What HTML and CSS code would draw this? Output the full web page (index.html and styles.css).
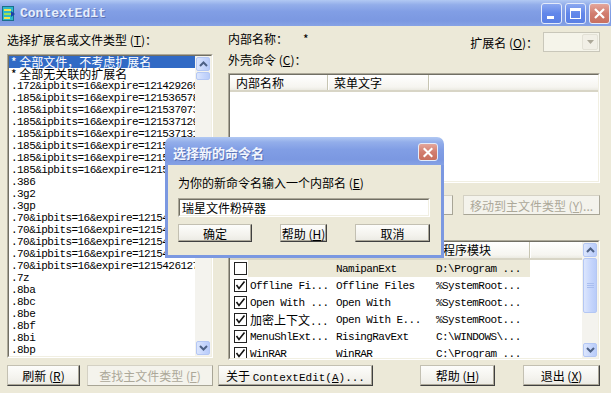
FILE: index.html
```html
<!DOCTYPE html>
<html lang="zh">
<head>
  <meta charset="UTF-8">
  <title>ContextEdit</title>
  <link rel="stylesheet" href="styles.css">
</head>
<body>
<div class="window">

  <!-- 标题栏 -->
  <div class="titlebar">
    <svg class="app-icon" width="13" height="15" viewBox="0 0 13 15">
      <rect x="0.5" y="0.5" width="11" height="14" fill="#2FB8C9" stroke="#1B6F8A"/>
      <rect x="2" y="3" width="7" height="2" fill="#F3E34B"/>
      <rect x="2" y="7" width="8" height="2" fill="#9BE05A"/>
      <rect x="2" y="11" width="6" height="2" fill="#F3E34B"/>
      <path d="M9 5 L13 8 L9 11 Z" fill="#1E3FA8"/>
    </svg>
    <span class="title">ContextEdit</span>
    <div class="caption-buttons">
      <span class="cap-btn"><svg width="19" height="19" viewBox="0 0 19 19"><rect x="5" y="12" width="7" height="3" fill="#fff"/></svg></span>
      <span class="cap-btn"><svg width="19" height="19" viewBox="0 0 19 19"><rect x="4.5" y="4.5" width="10" height="10" fill="none" stroke="#fff"/><rect x="4" y="4" width="11" height="3" fill="#fff"/></svg></span>
      <span class="cap-btn close"><svg width="19" height="19" viewBox="0 0 19 19"><path d="M5 5 L14 14 M14 5 L5 14" stroke="#fff" stroke-width="2.2"/></svg></span>
    </div>
  </div>

  <div class="client">
    <div class="main">

      <!-- 左边：扩展名列表 -->
      <div class="left-col">
        <div class="label row16">选择扩展名或文件类型 (<u>T</u>)：</div>
        <div class="sunken listbox">
          <div class="sunken-in">
            <div class="items">
              <div class="item cjk selected">* 全部文件，不考虑扩展名</div>
              <div class="item cjk">* 全部无关联的扩展名</div>
              <div class="item mono">.172&amp;ipbits=16&amp;expire=1214292695</div>
              <div class="item mono">.185&amp;ipbits=16&amp;expire=1215365788</div>
              <div class="item mono">.185&amp;ipbits=16&amp;expire=1215370735</div>
              <div class="item mono">.185&amp;ipbits=16&amp;expire=1215371295</div>
              <div class="item mono">.185&amp;ipbits=16&amp;expire=1215371315</div>
              <div class="item mono">.185&amp;ipbits=16&amp;expire=1215372208</div>
              <div class="item mono">.185&amp;ipbits=16&amp;expire=1215373410</div>
              <div class="item mono">.185&amp;ipbits=16&amp;expire=1215375542</div>
              <div class="item mono">.386</div>
              <div class="item mono">.3g2</div>
              <div class="item mono">.3gp</div>
              <div class="item mono">.70&amp;ipbits=16&amp;expire=1215420013</div>
              <div class="item mono">.70&amp;ipbits=16&amp;expire=1215421187</div>
              <div class="item mono">.70&amp;ipbits=16&amp;expire=1215423350</div>
              <div class="item mono">.70&amp;ipbits=16&amp;expire=1215424871</div>
              <div class="item mono">.70&amp;ipbits=16&amp;expire=1215426127</div>
              <div class="item mono">.7z</div>
              <div class="item mono">.8ba</div>
              <div class="item mono">.8bc</div>
              <div class="item mono">.8be</div>
              <div class="item mono">.8bf</div>
              <div class="item mono">.8bi</div>
              <div class="item mono">.8bp</div>
            </div>
            <div class="vscroll">
              <span class="sb-btn"><svg width="9" height="6" viewBox="0 0 9 6"><path d="M1 5 L4.5 1.5 L8 5" fill="none" stroke="#4D6185" stroke-width="2"/></svg></span>
              <span class="sb-thumb small"></span>
              <span class="sb-track"></span>
              <span class="sb-btn"><svg width="9" height="6" viewBox="0 0 9 6"><path d="M1 1 L4.5 4.5 L8 1" fill="none" stroke="#4D6185" stroke-width="2"/></svg></span>
            </div>
          </div>
        </div>
      </div>

      <!-- 右边：命令和处理程序 -->
      <div class="right-col">
        <div class="top-row">
          <div class="label row14">内部名称：<span class="star">*</span></div>
          <div class="ext">
            <span class="label">扩展名 (<u>O</u>)：</span>
            <div class="combo disabled">
              <span class="combo-btn"><svg width="7" height="4" viewBox="0 0 7 4"><path d="M0 0 L7 0 L3.5 4 Z" fill="#ACA899"/></svg></span>
            </div>
          </div>
        </div>
        <div class="label row14 shell-label">外壳命令 (<u>C</u>)：</div>

        <div class="sunken listview lv1">
          <div class="sunken-in col">
            <div class="header">
              <span class="hcol" style="width:98px">内部名称</span>
              <span class="hcol" style="width:101px">菜单文字</span>
              <span class="hfill"></span>
            </div>
          </div>
        </div>

        <div class="cmd-buttons">
          <button class="btn" style="width:70px">新建 (<u>N</u>)...</button>
          <button class="btn" style="width:70px">编辑 (<u>E</u>)...</button>
          <button class="btn disabled" style="width:75px">删除 (<u>D</u>)</button>
          <button class="btn disabled move">移动到主文件类型 (<u>Y</u>)...</button>
        </div>

        <div class="label row14 handler-label">上下文菜单处理程序 (<u>M</u>)：</div>

        <div class="sunken listview lv2">
          <div class="sunken-in">
            <div class="lv-body">
              <div class="header">
                <span class="hcol" style="width:102px">名称</span>
                <span class="hcol" style="width:100px">说明</span>
                <span class="hcol" style="width:98px">程序模块</span>
                <span class="hfill"></span>
              </div>
              <div class="row selected">
                <span class="chk"><svg width="13" height="13" viewBox="0 0 13 13"><rect x="0.5" y="0.5" width="12" height="12" fill="#fff" stroke="#222"/></svg></span>
                <span class="cells"><span class="c1 mono"></span><span class="c2 mono">NamipanExt</span><span class="c3 mono">D:\Program ...</span></span>
              </div>
              <div class="row">
                <span class="chk"><svg width="13" height="13" viewBox="0 0 13 13"><rect x="0.5" y="0.5" width="12" height="12" fill="#fff" stroke="#222"/><path d="M2.5 6 L5 9.5 L10.5 2.5" fill="none" stroke="#111" stroke-width="1.6"/></svg></span>
                <span class="cells"><span class="c1 mono">Offline Fi...</span><span class="c2 mono">Offline Files</span><span class="c3 mono">%SystemRoot...</span></span>
              </div>
              <div class="row">
                <span class="chk"><svg width="13" height="13" viewBox="0 0 13 13"><rect x="0.5" y="0.5" width="12" height="12" fill="#fff" stroke="#222"/><path d="M2.5 6 L5 9.5 L10.5 2.5" fill="none" stroke="#111" stroke-width="1.6"/></svg></span>
                <span class="cells"><span class="c1 mono">Open With ...</span><span class="c2 mono">Open With</span><span class="c3 mono">%SystemRoot...</span></span>
              </div>
              <div class="row">
                <span class="chk"><svg width="13" height="13" viewBox="0 0 13 13"><rect x="0.5" y="0.5" width="12" height="12" fill="#fff" stroke="#222"/><path d="M2.5 6 L5 9.5 L10.5 2.5" fill="none" stroke="#111" stroke-width="1.6"/></svg></span>
                <span class="cells"><span class="c1"><span class="cjk">加密上下文</span><span class="mono">...</span></span><span class="c2 mono">Open With E...</span><span class="c3 mono">%SystemRoot...</span></span>
              </div>
              <div class="row">
                <span class="chk"><svg width="13" height="13" viewBox="0 0 13 13"><rect x="0.5" y="0.5" width="12" height="12" fill="#fff" stroke="#222"/><path d="M2.5 6 L5 9.5 L10.5 2.5" fill="none" stroke="#111" stroke-width="1.6"/></svg></span>
                <span class="cells"><span class="c1 mono">MenuShlExt...</span><span class="c2 mono">RisingRavExt</span><span class="c3 mono">C:\WINDOWS\...</span></span>
              </div>
              <div class="row">
                <span class="chk"><svg width="13" height="13" viewBox="0 0 13 13"><rect x="0.5" y="0.5" width="12" height="12" fill="#fff" stroke="#222"/><path d="M2.5 6 L5 9.5 L10.5 2.5" fill="none" stroke="#111" stroke-width="1.6"/></svg></span>
                <span class="cells"><span class="c1 mono">WinRAR</span><span class="c2 mono">WinRAR</span><span class="c3 mono">C:\Program ...</span></span>
              </div>
            </div>
            <div class="vscroll">
              <span class="sb-btn"><svg width="9" height="6" viewBox="0 0 9 6"><path d="M1 5 L4.5 1.5 L8 5" fill="none" stroke="#4D6185" stroke-width="2"/></svg></span>
              <span class="sb-thumb big"><svg width="7" height="7" viewBox="0 0 7 7"><path d="M0 1.5 H7 M0 3.5 H7 M0 5.5 H7" stroke="#A9BEEF"/></svg></span>
              <span class="sb-track"></span>
              <span class="sb-btn"><svg width="9" height="6" viewBox="0 0 9 6"><path d="M1 1 L4.5 4.5 L8 1" fill="none" stroke="#4D6185" stroke-width="2"/></svg></span>
            </div>
          </div>
        </div>
      </div>
    </div>

    <!-- 底部按钮 -->
    <div class="bottom-buttons">
      <button class="btn b-refresh">刷新 (<u>R</u>)</button>
      <button class="btn disabled b-find">查找主文件类型 (<u>F</u>)</button>
      <button class="btn b-about">关于 <span class="mono big">ContextEdit(<u>A</u>)...</span></button>
      <button class="btn b-help">帮助 (<u>H</u>)</button>
      <button class="btn b-exit">退出 (<u>X</u>)</button>
    </div>
  </div>

  <!-- 对话框：选择新的命令名 -->
  <div class="dialog">
    <div class="dlg-titlebar">
      <span class="dlg-title">选择新的命令名</span>
      <span class="cap-btn close dlg-close"><svg width="19" height="17" viewBox="0 0 19 17"><path d="M5 4 L14 13 M14 4 L5 13" stroke="#fff" stroke-width="2.2"/></svg></span>
    </div>
    <div class="dlg-body">
      <div class="label row14">为你的新命令名输入一个内部名 (<u>E</u>)</div>
      <div class="sunken textbox"><div class="sunken-in">瑞星文件粉碎器</div></div>
      <div class="dlg-buttons">
        <button class="btn" style="width:74px">确定</button>
        <button class="btn" style="width:47px">帮助 (<u>H</u>)</button>
        <button class="btn" style="width:75px">取消</button>
      </div>
    </div>
  </div>

</div>
</body>
</html>
```

FILE: styles.css
```css
* {
  margin: 0;
  padding: 0;
  box-sizing: border-box;
}

body {
  width: 611px;
  height: 393px;
  overflow: hidden;
  font-family: "Noto Sans CJK SC", sans-serif;
  font-size: 12px;
  color: #000;
  background-color: #ECE9D8;
}

u {
  text-decoration: underline;
  text-underline-offset: 1px;
}

/* 宋体的 ASCII 字符较窄、较高 */
.mono {
  font-family: "Liberation Mono", monospace;
  font-size: 11px;
  letter-spacing: -0.55px;
}

.cjk {
  font-family: "Noto Sans CJK SC", sans-serif;
  font-size: 12px;
}

.window {
  position: relative;
  width: 611px;
  height: 393px;
  display: flex;
  flex-direction: column;
}

/* 标题栏 */
.titlebar {
  height: 26px;
  display: flex;
  align-items: center;
  padding: 0 1px 0 2px;
  background: linear-gradient(180deg, #B2C9F3 0%, #93AEEA 18%, #819EE5 45%, #7B98E1 80%, #86A2E5 100%);
}

.app-icon {
  margin-right: 5px;
}

.title {
  flex: 1;
  font-family: "Liberation Mono", monospace;
  font-weight: bold;
  font-size: 13px;
  color: #E6EEFC;
  text-shadow: 1px 1px #5B72B5;
}

.caption-buttons {
  display: flex;
  gap: 3px;
}

.cap-btn {
  width: 21px;
  height: 21px;
  display: flex;
  align-items: center;
  justify-content: center;
  border: 1px solid #E4EBFA;
  border-radius: 3px;
  background: linear-gradient(180deg, #8CA8F0 0%, #6187EA 50%, #5B80E4 100%);
}

.cap-btn.close {
  background: linear-gradient(180deg, #E4A79C 0%, #D27D6F 50%, #C8705F 100%);
}

/* 客户区 */
.client {
  flex: 1;
  padding: 6px 11px 0 7px;
}

.main {
  display: grid;
  grid-template-columns: 206px 372px;
  column-gap: 15px;
}

.label {
  white-space: nowrap;
}

.row16 {
  line-height: 16px;
}

.row14 {
  line-height: 14px;
}

/* 凹陷边框 */
.sunken {
  border: 1px solid;
  border-color: #ACA899 #FFFFFF #FFFFFF #ACA899;
  background: #fff;
}

.sunken-in {
  height: 100%;
  border: 1px solid;
  border-color: #716F64 #F1EFE2 #F1EFE2 #716F64;
  display: flex;
  overflow: hidden;
}

.sunken-in.col {
  flex-direction: column;
}

/* 左边列表 */
.listbox {
  margin-top: 6px;
  height: 304px;
}

.items {
  flex: 1;
  overflow: hidden;
}

.item {
  height: 12px;
  line-height: 12px;
  padding-left: 2px;
  white-space: nowrap;
}

.item.cjk {
  font-size: 12px;
}

.item.selected {
  background-color: #316AC5;
  color: #fff;
}

/* 滚动条 */
.vscroll {
  width: 16px;
  display: flex;
  flex-direction: column;
  background-color: #F4F3EE;
}

.sb-btn,
.sb-thumb {
  display: flex;
  align-items: center;
  justify-content: center;
  margin: 1px 1px 0 1px;
  border: 1px solid #B4C7F4;
  border-radius: 2px;
  background: linear-gradient(90deg, #DCE6FD 0%, #C5D5FC 60%, #B9CCF9 100%);
}

.sb-btn {
  height: 14px;
}

.sb-btn:last-child {
  margin-bottom: 1px;
}

.sb-thumb.small {
  height: 8px;
}

.sb-thumb.big {
  height: 55px;
}

.sb-track {
  flex: 1;
}

/* 右边 */
.top-row {
  height: 20px;
  display: flex;
  justify-content: space-between;
}

.star {
  margin-left: 15px;
}

.ext {
  display: flex;
  align-items: center;
  gap: 5px;
}

.combo {
  width: 57px;
  height: 20px;
  border: 1px solid #C9C7BA;
  background-color: #F5F4EA;
  display: flex;
  justify-content: flex-end;
  padding: 1px;
}

.combo-btn {
  width: 16px;
  display: flex;
  align-items: center;
  justify-content: center;
  border: 1px solid #E3E1D6;
  border-radius: 2px;
  background-color: #F1EFE6;
}

.shell-label {
  margin-top: 1px;
}

.listview {
  margin-top: 6px;
}

.lv1 {
  height: 110px;
}

.lv2 {
  height: 120px;
}

.header {
  height: 17px;
  display: flex;
  background: linear-gradient(180deg, #FFFFFF 0%, #F6F5F0 80%, #EBEAE2 100%);
  border-bottom: 2px solid #D8D5C6;
  flex-shrink: 0;
}

.hcol {
  padding-left: 6px;
  line-height: 15px;
  border-right: 1px solid #C7C5B2;
  box-shadow: 1px 0 #fff;
  white-space: nowrap;
  overflow: hidden;
}

.hfill {
  flex: 1;
}

.lv2 .header {
  height: 18px;
}

.lv2 .hcol:nth-child(3) {
  padding-left: 11px;
}

.lv-body {
  flex: 1;
  overflow: hidden;
}

.row {
  height: 17px;
  display: flex;
  align-items: center;
  white-space: nowrap;
}

.chk {
  width: 18px;
  padding-left: 4px;
  display: flex;
  align-items: center;
}

.cells {
  height: 17px;
  display: flex;
  align-items: center;
}

.row.selected .cells {
  background-color: #ECE9D8;
}

.c1 {
  width: 84px;
  padding-left: 2px;
  overflow: hidden;
}

.c2 {
  width: 100px;
  padding-left: 4px;
}

.c3 {
  width: 98px;
  padding-left: 4px;
}

/* 按钮 */
.btn {
  height: 20px;
  font-family: "Noto Sans CJK SC", sans-serif;
  font-size: 12px;
  color: #000;
  white-space: nowrap;
  border: 1px solid;
  border-color: #C3C0B2 #404040 #404040 #C3C0B2;
  box-shadow: inset -1px -1px #ACA899;
  background: linear-gradient(180deg, #FDFDFB 0%, #F4F3EE 60%, #EBEAE3 100%);
}

.btn.disabled {
  color: #ACA899;
  border-color: #D4D1C4 #A8A596 #A8A596 #D4D1C4;
  box-shadow: none;
  background: #F4F3EC;
}

.cmd-buttons {
  margin-top: 12px;
  display: flex;
  gap: 5px;
}

.cmd-buttons .move {
  width: 137px;
  margin-left: 5px;
}

.handler-label {
  margin-top: 5px;
}

.bottom-buttons {
  margin-top: 5px;
  display: flex;
}

.bottom-buttons .btn {
  height: 21px;
}

.b-refresh {
  width: 73px;
}

.b-find {
  width: 126px;
  margin-left: 7px;
}

.b-about {
  width: 155px;
  margin-left: 5px;
}

.b-about .big {
  letter-spacing: 0;
}

.b-help {
  width: 75px;
  margin-left: 47px;
}

.b-exit {
  width: 77px;
  margin-left: 28px;
}

/* 对话框 */
.dialog {
  position: absolute;
  left: 165px;
  top: 137px;
  width: 279px;
  height: 121px;
  display: flex;
  flex-direction: column;
}

.dlg-titlebar {
  height: 28px;
  display: flex;
  align-items: center;
  justify-content: space-between;
  padding: 2px 6px 0 8px;
  border-radius: 7px 7px 0 0;
  background: linear-gradient(180deg, #B2C9F3 0%, #93AEEA 18%, #819EE5 45%, #7B98E1 80%, #86A2E5 100%);
}

.dlg-title {
  font-weight: bold;
  font-size: 13px;
  color: #F2F6FE;
  text-shadow: 1px 1px #5B72B5;
}

.dlg-close {
  width: 20px;
  height: 18px;
}

.dlg-body {
  flex: 1;
  padding: 11px 0 0 10px;
  border: 3px solid #7B98E1;
  border-top: none;
  background-color: #ECE9D8;
}

.textbox {
  margin-top: 8px;
  width: 252px;
  height: 19px;
}

.textbox .sunken-in {
  align-items: center;
  padding-left: 2px;
  line-height: 15px;
}

.dlg-buttons {
  margin-top: 7px;
  display: flex;
  gap: 28px;
}

.dlg-buttons .btn {
  height: 18px;
}
```
